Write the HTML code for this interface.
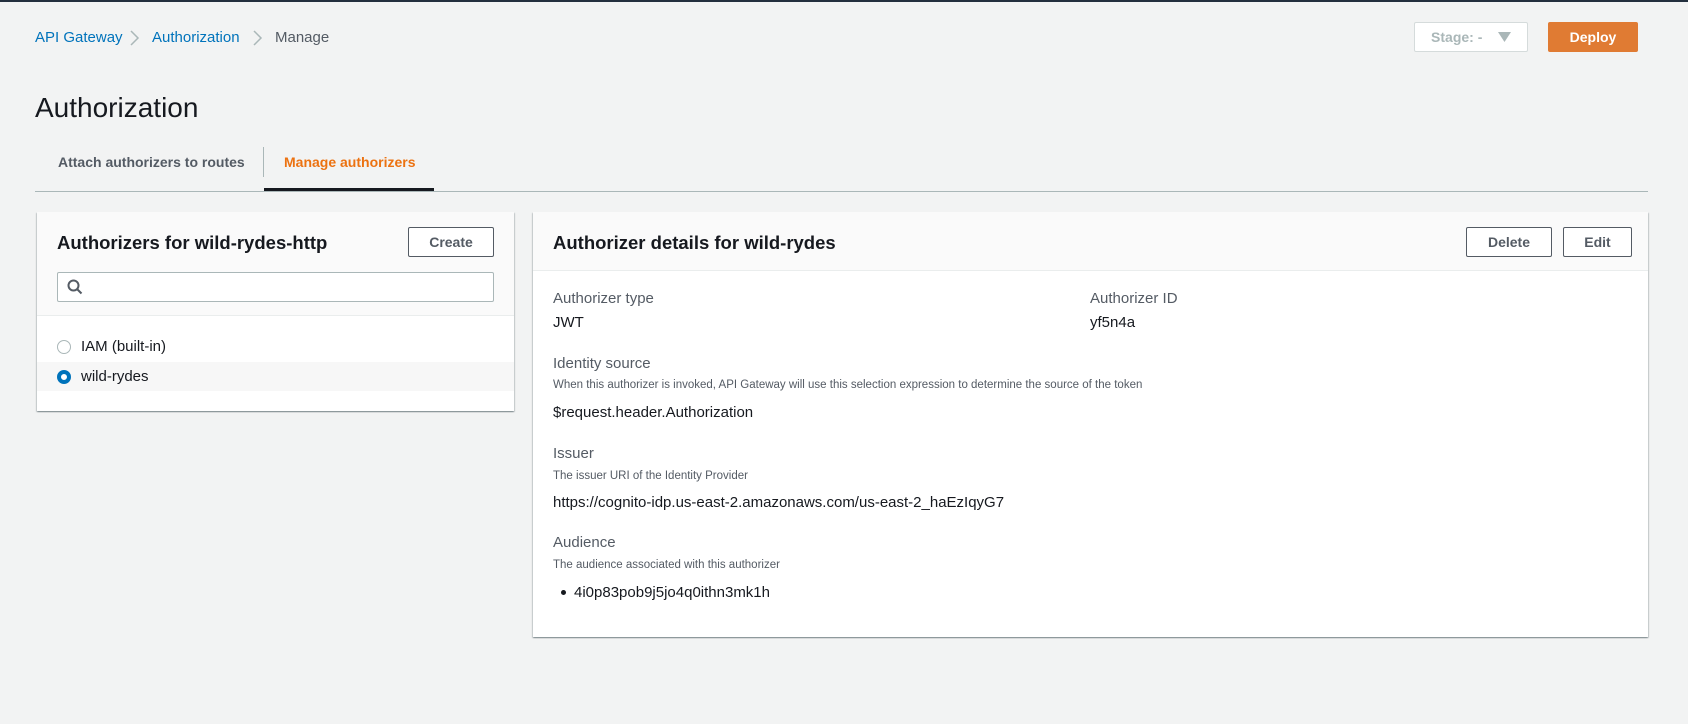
<!DOCTYPE html>
<html><head><meta charset="utf-8"><style>
*{box-sizing:border-box;margin:0;padding:0}
body{width:1688px;height:724px;background:#f2f3f3;font-family:"Liberation Sans",sans-serif;color:#16191f;position:relative;overflow:hidden;font-size:15px}
.a{position:absolute;white-space:nowrap}
.btn{position:absolute;border:1px solid #545b64;border-radius:2px;background:#fff;color:#545b64;font-weight:bold;font-size:14px;display:flex;align-items:center;justify-content:center}
.lbl{color:#545b64;font-size:15px}
.desc{color:#545b64;font-size:11.5px}
.panel{position:absolute;background:#fff;box-shadow:0 1px 1px 0 rgba(0,28,36,.3),1px 1px 1px 0 rgba(0,28,36,.15),-1px 1px 1px 0 rgba(0,28,36,.15)}
.hdr{position:absolute;left:0;right:0;top:0;background:#fafafa;border-bottom:1px solid #eaeded}
</style></head><body>
<div class="a" style="left:0;top:0;width:1688px;height:2px;background:#232f3e"></div>
<div class="a" style="left:35px;top:29px;font-size:15px;color:#0073bb">API Gateway</div>
<svg class="a" style="left:128px;top:29px" width="12" height="18" viewBox="0 0 12 18"><path d="M3 2l7 7-7 7" fill="none" stroke="#aab7b8" stroke-width="1.5"/></svg>
<div class="a" style="left:152px;top:29px;font-size:15px;color:#0073bb">Authorization</div>
<svg class="a" style="left:251px;top:29px" width="12" height="18" viewBox="0 0 12 18"><path d="M3 2l7 7-7 7" fill="none" stroke="#aab7b8" stroke-width="1.5"/></svg>
<div class="a" style="left:275px;top:29px;font-size:15px;color:#545b64">Manage</div>
<div class="a" style="left:1414px;top:22px;width:114px;height:30px;background:#fff;border:1px solid #d5dbdb;border-radius:2px;color:#aab7b8;font-weight:bold;font-size:14px;display:flex;align-items:center;justify-content:center">Stage: -&nbsp;&nbsp;&nbsp;&nbsp;<svg width="13" height="10" viewBox="0 0 13 10"><path d="M0 0h13L6.5 10z" fill="#aab7b8"/></svg></div>
<div class="a" style="left:1548px;top:22px;width:90px;height:30px;background:#e07b33;border-radius:2px;color:#fff;font-weight:bold;font-size:14px;display:flex;align-items:center;justify-content:center">Deploy</div>
<div class="a" style="left:35px;top:92px;font-size:28px">Authorization</div>
<div class="a" style="left:58px;top:154px;font-size:14px;font-weight:bold;color:#545b64">Attach authorizers to routes</div>
<div class="a" style="left:263px;top:147px;width:1px;height:30px;background:#aab7b8"></div>
<div class="a" style="left:284px;top:154px;font-size:14px;font-weight:bold;color:#ec7211">Manage authorizers</div>
<div class="a" style="left:35px;top:191px;width:1613px;height:1px;background:#aab7b8"></div>
<div class="a" style="left:264px;top:188px;width:170px;height:3px;background:#16191f"></div>

<div class="panel" style="left:37px;top:212px;width:477px;height:199px">
<div class="hdr" style="height:104px"></div>
<div class="a" style="left:20px;top:20px;font-size:18.5px;font-weight:bold">Authorizers for wild-rydes-http</div>
<div class="btn" style="left:371px;top:15px;width:86px;height:30px">Create</div>
<div class="a" style="left:20px;top:60px;width:437px;height:30px;background:#fff;border:1px solid #aab7b8;border-radius:2px">
<svg width="16" height="16" viewBox="0 0 16 16" style="position:absolute;left:9px;top:6px"><circle cx="6.5" cy="6.5" r="5" fill="none" stroke="#545b64" stroke-width="2"/><path d="M10 10l4.5 4.5" stroke="#545b64" stroke-width="2"/></svg></div>
<div class="a" style="left:0;top:150px;width:477px;height:29px;background:#f7f7f7"></div>
<div class="a" style="left:20px;top:128px;width:14px;height:14px;border:1px solid #aab7b8;border-radius:50%;background:#fff"></div>
<div class="a" style="left:44px;top:126px;font-size:15px">IAM (built-in)</div>
<div class="a" style="left:20px;top:158px;width:14px;height:14px;border:4px solid #0073bb;border-radius:50%;background:#fff"></div>
<div class="a" style="left:44px;top:156px;font-size:15px">wild-rydes</div>
</div>

<div class="panel" style="left:533px;top:212px;width:1115px;height:425px">
<div class="hdr" style="height:59px"></div>
<div class="a" style="left:20px;top:20px;font-size:18.5px;font-weight:bold">Authorizer details for wild-rydes</div>
<div class="btn" style="left:933px;top:15px;width:86px;height:30px">Delete</div>
<div class="btn" style="left:1030px;top:15px;width:69px;height:30px">Edit</div>
<div class="a lbl" style="left:20px;top:78px">Authorizer type</div>
<div class="a" style="left:20px;top:102px">JWT</div>
<div class="a lbl" style="left:557px;top:78px">Authorizer ID</div>
<div class="a" style="left:557px;top:102px">yf5n4a</div>
<div class="a lbl" style="left:20px;top:143px">Identity source</div>
<div class="a desc" style="left:20px;top:167px">When this authorizer is invoked, API Gateway will use this selection expression to determine the source of the token</div>
<div class="a" style="left:20px;top:192px">$request.header.Authorization</div>
<div class="a lbl" style="left:20px;top:233px">Issuer</div>
<div class="a desc" style="left:20px;top:258px">The issuer URI of the Identity Provider</div>
<div class="a" style="left:20px;top:282px">https://cognito-idp.us-east-2.amazonaws.com/us-east-2_haEzIqyG7</div>
<div class="a lbl" style="left:20px;top:322px">Audience</div>
<div class="a desc" style="left:20px;top:347px">The audience associated with this authorizer</div>
<div class="a" style="left:28px;top:378px;width:5px;height:5px;border-radius:50%;background:#16191f"></div>
<div class="a" style="left:41px;top:372px">4i0p83pob9j5jo4q0ithn3mk1h</div>
</div>
</body></html>
